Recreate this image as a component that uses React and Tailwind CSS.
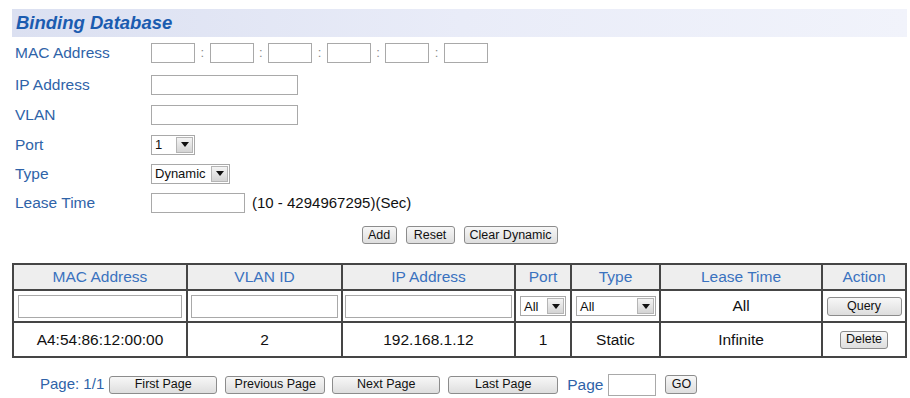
import React from 'react';

const font = { fontFamily: '"Liberation Sans", Arial, sans-serif' };

const TextBox = ({ className = '' }) => (
  <input
    type="text"
    className={`h-[20px] border border-[#a9a9a9] bg-white outline-none ${className}`}
  />
);

const Btn = ({ children, className = '' }) => (
  <button
    type="button"
    className={`flex items-center justify-center rounded-[3px] border border-[#8c8c8c] bg-gradient-to-b from-[#f7f7f7] to-[#dedede] text-[12.5px] leading-none text-[#111] ${className}`}
  >
    {children}
  </button>
);

const Arrow = () => (
  <span className="flex h-[16px] w-[17px] items-center justify-center border border-[#b5b5b5] bg-gradient-to-b from-[#f4f4f4] to-[#d4d4d4]">
    <svg width="8" height="5" viewBox="0 0 8 5">
      <path d="M0 0h8L4 5z" fill="#111" />
    </svg>
  </span>
);

const FakeSelect = ({ value, className = '' }) => (
  <div
    className={`flex h-[20px] items-center justify-between border border-[#a9a9a9] bg-white pl-[3px] pr-[1px] text-[13px] text-[#111] ${className}`}
  >
    <span className="leading-none">{value}</span>
    <Arrow />
  </div>
);

const Row = ({ label, h, children }) => (
  <div className={`flex items-center ${h}`}>
    <div className="w-[139px] pl-[3px] text-[15.5px] text-[#2f63a8]">{label}</div>
    <div className="flex items-center">{children}</div>
  </div>
);

export default function App() {
  const macParts = [0, 1, 2, 3, 4, 5];
  const th = 'border-2 border-[#454545] bg-[#eeeeee] text-center text-[15.5px] font-normal text-[#3a72bf] h-[26px]';
  const td = 'border-2 border-[#454545] text-center text-[15.5px] text-[#111]';

  return (
    <div className="min-h-[398px] w-[910px] bg-white px-[12px] pt-[9px]" style={font}>
      <div className="flex h-[28px] w-[895px] items-center bg-gradient-to-r from-[#dbe0f1] via-[#e9ecf8] to-[#f1f3fb] pl-[4px]">
        <h1 className="text-[18.5px] font-bold italic text-[#1b5cb0]">Binding Database</h1>
      </div>

      <div className="flex flex-col">
        <Row label="MAC Address" h="h-[32px]">
          {macParts.map((i) => (
            <React.Fragment key={i}>
              {i > 0 && <span className="w-[14.6px] text-center text-[13px] text-[#888]">:</span>}
              <TextBox className="w-[44px]" />
            </React.Fragment>
          ))}
        </Row>
        <Row label="IP Address" h="h-[31px]">
          <TextBox className="w-[147px]" />
        </Row>
        <Row label="VLAN" h="h-[30px]">
          <TextBox className="w-[147px]" />
        </Row>
        <Row label="Port" h="h-[29px]">
          <FakeSelect value="1" className="w-[44px]" />
        </Row>
        <Row label="Type" h="h-[29px]">
          <FakeSelect value="Dynamic" className="w-[79px]" />
        </Row>
        <Row label="Lease Time" h="h-[30px]">
          <TextBox className="w-[94px]" />
          <span className="ml-[7px] text-[15px] text-[#111]">(10 - 4294967295)(Sec)</span>
        </Row>
      </div>

      <div className="flex h-[34px] w-[895px] items-center justify-center gap-[9px]">
        <Btn className="h-[18px] w-[35px]">Add</Btn>
        <Btn className="h-[18px] w-[49px]">Reset</Btn>
        <Btn className="h-[18px] w-[94px]">Clear Dynamic</Btn>
      </div>

      <table className="mt-[11px] w-[893px] table-fixed border-collapse border-2 border-[#454545]">
        <colgroup>
          <col className="w-[174px]" />
          <col className="w-[155px]" />
          <col className="w-[173px]" />
          <col className="w-[56px]" />
          <col className="w-[89px]" />
          <col className="w-[162px]" />
          <col className="w-[84px]" />
        </colgroup>
        <thead>
          <tr>
            <th className={th}>MAC Address</th>
            <th className={th}>VLAN ID</th>
            <th className={th}>IP Address</th>
            <th className={th}>Port</th>
            <th className={th}>Type</th>
            <th className={th}>Lease Time</th>
            <th className={th}>Action</th>
          </tr>
        </thead>
        <tbody>
          <tr className="h-[32px]">
            <td className={`${td} px-[4px]`}>
              <TextBox className="h-[23px] w-full" />
            </td>
            <td className={`${td} px-[3px]`}>
              <TextBox className="h-[23px] w-full" />
            </td>
            <td className={`${td} px-[2px]`}>
              <TextBox className="h-[23px] w-full" />
            </td>
            <td className={`${td} px-[4px]`}>
              <FakeSelect value="All" className="w-[46px]" />
            </td>
            <td className={`${td} px-[4px]`}>
              <FakeSelect value="All" className="w-[80px]" />
            </td>
            <td className={td}>All</td>
            <td className={td}>
              <div className="flex justify-center">
                <Btn className="h-[19px] w-[75px]">Query</Btn>
              </div>
            </td>
          </tr>
          <tr className="h-[35px]">
            <td className={td}>A4:54:86:12:00:00</td>
            <td className={td}>2</td>
            <td className={td}>192.168.1.12</td>
            <td className={td}>1</td>
            <td className={td}>Static</td>
            <td className={td}>Infinite</td>
            <td className={td}>
              <div className="flex justify-center">
                <Btn className="h-[18px] w-[48px]">Delete</Btn>
              </div>
            </td>
          </tr>
        </tbody>
      </table>

      <div className="mt-[15px] flex items-center pl-[28px]">
        <span className="text-[15px] text-[#2f63a8]">Page: 1/1</span>
        <Btn className="ml-[5px] h-[18px] w-[108px]">First Page</Btn>
        <Btn className="ml-[8px] h-[18px] w-[100px]">Previous Page</Btn>
        <Btn className="ml-[7px] h-[18px] w-[108px]">Next Page</Btn>
        <Btn className="ml-[8px] h-[18px] w-[110px]">Last Page</Btn>
        <span className="ml-[9px] text-[15.5px] text-[#2f63a8]">Page</span>
        <TextBox className="ml-[5px] h-[22px] w-[48px]" />
        <Btn className="ml-[9px] h-[19px] w-[32px]">GO</Btn>
      </div>
    </div>
  );
}
